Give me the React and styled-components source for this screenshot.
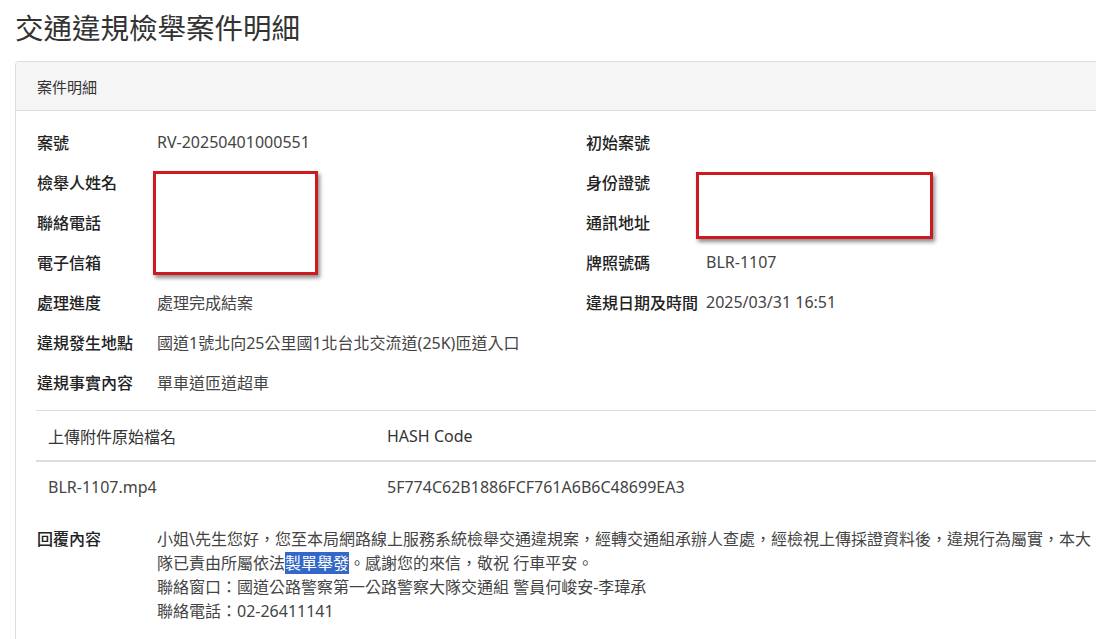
import React from 'react'
import styled, { createGlobalStyle } from 'styled-components'

const GlobalStyle = createGlobalStyle`
  html, body {
    margin: 0;
    padding: 0;
    background: #fff;
    overflow: hidden;
  }
  body {
    font-family: "Noto Sans", "Noto Sans CJK TC", sans-serif;
    color: #333;
  }
`

// Page
const StyledPage = styled.div`
  position: relative;
  width: 1170px;
  padding: 0 15px;
`

const StyledTitle = styled.h1`
  margin: 0;
  padding-top: 9px;
  height: 61px;
  box-sizing: border-box;
  font-size: 28.5px;
  font-weight: 400;
  line-height: 38px;
  color: #333;
`

// Panel
const StyledPanel = styled.div`
  width: 1140px;
  border: 1px solid #ddd;
  border-radius: 4px;
  background: #fff;
`

const StyledPanelHeader = styled.div`
  height: 48px;
  padding: 0 21px;
  display: flex;
  align-items: center;
  background: #f5f5f5;
  border-bottom: 1px solid #ddd;
  border-radius: 4px 4px 0 0;
  font-size: 15px;
  color: #333;
`

const StyledPanelBody = styled.div`
  padding: 11px 21px 40px 21px;
`

// Info grid
const StyledGrid = styled.div`
  display: grid;
  grid-template-columns: 549px 549px;
`

const StyledField = styled.div`
  display: flex;
  align-items: center;
  height: 40px;
  grid-column: ${props => props.wide ? '1 / span 2' : 'auto'};
  font-size: 16px;
`

const StyledLabel = styled.div`
  width: 120px;
  flex-shrink: 0;
  font-weight: 500;
  color: #222;
`

const StyledValue = styled.div`
  color: #444;
`

// Attachment table
const StyledTable = styled.table`
  width: 100%;
  margin-top: 8px;
  margin-left: -1px;
  border-collapse: collapse;
  font-size: 16px;
`

const StyledTh = styled.th`
  height: 49px;
  padding: 0 12px;
  text-align: left;
  font-weight: 400;
  color: #333;
  border-top: 1px solid #ddd;
  border-bottom: 2px solid #ddd;
  width: ${props => props.w || 'auto'};
`

const StyledTd = styled.td`
  height: 49px;
  padding: 0 12px;
  color: #444;
`

// Reply
const StyledReply = styled.div`
  display: flex;
  margin-top: 16px;
  font-size: 16px;
  line-height: 24px;
`

const StyledReplyText = styled.div`
  width: 948px;
  color: #444;
`

const StyledMark = styled.span`
  background: #3367c8;
  color: #fff;
`

// Redaction overlays
const StyledRedact = styled.div`
  position: absolute;
  left: ${props => props.x}px;
  top: ${props => props.y}px;
  width: ${props => props.w}px;
  height: ${props => props.h}px;
  box-sizing: border-box;
  border: 3px solid #cc1a1f;
  background: #fff;
  box-shadow: 2px 3px 4px rgba(0, 0, 0, 0.45);
`

const fields = [
  { label: '案號', value: 'RV-20250401000551' },
  { label: '初始案號', value: '' },
  { label: '檢舉人姓名', value: '' },
  { label: '身份證號', value: '' },
  { label: '聯絡電話', value: '' },
  { label: '通訊地址', value: '' },
  { label: '電子信箱', value: '' },
  { label: '牌照號碼', value: 'BLR-1107' },
  { label: '處理進度', value: '處理完成結案' },
  { label: '違規日期及時間', value: '2025/03/31 16:51' },
  { label: '違規發生地點', value: '國道1號北向25公里國1北台北交流道(25K)匝道入口', wide: true },
  { label: '違規事實內容', value: '單車道匝道超車', wide: true },
]

const App = () => {
  return (
    <>
      <GlobalStyle />
      <StyledPage>
        <StyledTitle>交通違規檢舉案件明細</StyledTitle>

        <StyledPanel>
          <StyledPanelHeader>案件明細</StyledPanelHeader>
          <StyledPanelBody>

            {/* Case fields */}
            <StyledGrid>
              {fields.map(f => (
                <StyledField key={f.label} wide={f.wide}>
                  <StyledLabel>{f.label}</StyledLabel>
                  <StyledValue>{f.value}</StyledValue>
                </StyledField>
              ))}
            </StyledGrid>

            {/* Attachments */}
            <StyledTable>
              <thead>
                <tr>
                  <StyledTh w='315px'>上傳附件原始檔名</StyledTh>
                  <StyledTh>HASH Code</StyledTh>
                </tr>
              </thead>
              <tbody>
                <tr>
                  <StyledTd>BLR-1107.mp4</StyledTd>
                  <StyledTd>5F774C62B1886FCF761A6B6C48699EA3</StyledTd>
                </tr>
              </tbody>
            </StyledTable>

            {/* Reply */}
            <StyledReply>
              <StyledLabel>回覆內容</StyledLabel>
              <StyledReplyText>
                小姐\先生您好，您至本局網路線上服務系統檢舉交通違規案，經轉交通組承辦人查處，經檢視上傳採證資料後，違規行為屬實，本大隊已責由所屬依法<StyledMark>製單舉發</StyledMark>。感謝您的來信，敬祝 行車平安。
                <br />
                聯絡窗口：國道公路警察第一公路警察大隊交通組 警員何峻安-李瑋承
                <br />
                聯絡電話：02-26411141
              </StyledReplyText>
            </StyledReply>

          </StyledPanelBody>
        </StyledPanel>

        <StyledRedact x={153} y={171} w={165} h={104} />
        <StyledRedact x={696} y={172} w={237} h={67} />
      </StyledPage>
    </>
  )
}

export default App
